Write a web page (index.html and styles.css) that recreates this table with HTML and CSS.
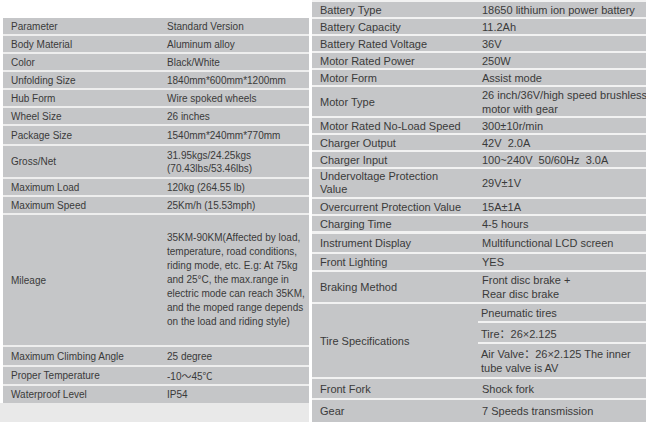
FILE: index.html
```html
<!DOCTYPE html>
<html>
<head>
<meta charset="utf-8">
<link rel="stylesheet" href="styles.css">
</head>
<body>
<div class="page">
  <div class="left-col">
    <div class="spec spec-left">
      <div class="row h16"><div class="k">Parameter</div><div class="v">Standard Version</div></div>
      <div class="row h16"><div class="k">Body Material</div><div class="v">Aluminum alloy</div></div>
      <div class="row h16"><div class="k">Color</div><div class="v">Black/White</div></div>
      <div class="row h16"><div class="k">Unfolding Size</div><div class="v">1840mm*600mm*1200mm</div></div>
      <div class="row h16"><div class="k">Hub Form</div><div class="v">Wire spoked wheels</div></div>
      <div class="row h16"><div class="k">Wheel Size</div><div class="v">26 inches</div></div>
      <div class="row h18"><div class="k">Package Size</div><div class="v">1540mm*240mm*770mm</div></div>
      <div class="row h31"><div class="k">Gross/Net</div><div class="v lh13">31.95kgs/24.25kgs<br>(70.43lbs/53.46lbs)</div></div>
      <div class="row h16"><div class="k">Maximum Load</div><div class="v">120kg (264.55 lb)</div></div>
      <div class="row h16"><div class="k">Maximum Speed</div><div class="v">25Km/h (15.53mph)</div></div>
      <div class="row h130"><div class="k">Mileage</div><div class="v lh14">35KM-90KM(Affected by load,<br>temperature, road conditions,<br>riding mode, etc. E.g: At 75kg<br>and 25°C, the max.range in<br>electric mode can reach 35KM,<br>and the moped range depends<br>on the load and riding style)</div></div>
      <div class="row h18"><div class="k">Maximum Climbing Angle</div><div class="v">25 degree</div></div>
      <div class="row h17"><div class="k">Proper Temperature</div><div class="v">-10～45℃</div></div>
      <div class="row h17"><div class="k">Waterproof Level</div><div class="v">IP54</div></div>
    </div>
    <div class="footer-band"></div>
  </div>
  <div class="spec spec-right">
    <div class="row h15"><div class="k">Battery Type</div><div class="v">18650 lithium ion power battery</div></div>
    <div class="row h15"><div class="k">Battery Capacity</div><div class="v">11.2Ah</div></div>
    <div class="row h15"><div class="k">Battery Rated Voltage</div><div class="v">36V</div></div>
    <div class="row h15"><div class="k">Motor Rated Power</div><div class="v">250W</div></div>
    <div class="row h15"><div class="k">Motor Form</div><div class="v">Assist mode</div></div>
    <div class="row h29"><div class="k">Motor Type</div><div class="v lh14">26 inch/36V/high speed brushless<br>motor with gear</div></div>
    <div class="row h15"><div class="k">Motor Rated No-Load Speed</div><div class="v">300±10r/min</div></div>
    <div class="row h15"><div class="k">Charger Output</div><div class="v">42V&nbsp; 2.0A</div></div>
    <div class="row h15"><div class="k">Charger Input</div><div class="v">100~240V&nbsp; 50/60Hz&nbsp; 3.0A</div></div>
    <div class="row h28"><div class="k lh13">Undervoltage Protection<br>Value</div><div class="v">29V±1V</div></div>
    <div class="row h15"><div class="k">Overcurrent Protection Value</div><div class="v">15A±1A</div></div>
    <div class="row h15"><div class="k">Charging Time</div><div class="v">4-5 hours</div></div>
    <div class="row h18 gap-above"><div class="k">Instrument Display</div><div class="v">Multifunctional LCD screen</div></div>
    <div class="row h16"><div class="k">Front Lighting</div><div class="v">YES</div></div>
    <div class="row h30"><div class="k">Braking Method</div><div class="v lh14">Front disc brake +<br>Rear disc brake</div></div>
    <div class="row h73">
      <div class="k">Tire Specifications</div>
      <div class="subs">
        <div class="sub h17">Pneumatic tires</div>
        <div class="sub h19">Tire：26×2.125</div>
        <div class="sub grow lh14">Air Valve：26×2.125 The inner<br>tube valve is AV</div>
      </div>
    </div>
    <div class="row h19"><div class="k">Front Fork</div><div class="v">Shock fork</div></div>
    <div class="row h22"><div class="k">Gear</div><div class="v">7 Speeds transmission</div></div>
  </div>
</div>
</body>
</html>
```
FILE: styles.css
```css
html, body {
  margin: 0;
  padding: 0;
  background: #ffffff;
}
body {
  font-family: "Liberation Sans", Arial, "Noto Sans CJK SC", sans-serif;
  color: #3a3a3a;
}
.page {
  width: 646px;
  height: 422px;
  display: flex;
  overflow: hidden;
  background: #ffffff;
}
.left-col {
  width: 309px;
  flex: none;
  display: flex;
  flex-direction: column;
  padding-top: 18px;
  box-sizing: border-box;
}
.spec {
  display: flex;
  flex-direction: column;
  gap: 2px;
}
.spec-left {
  margin-left: 3px;
  font-size: 10px;
  background: #eeeeee;
}
.footer-band {
  flex: 1;
  background: #e9e9e9;
}
.spec-right {
  flex: 1;
  margin-left: 3px;
  padding-top: 2px;
  font-size: 11px;
  overflow: hidden;
  background: #f2f2f2;
  align-self: flex-start;
}
.row {
  display: grid;
  background: #c5c6c8;
  white-space: nowrap;
}
.spec-left .row {
  grid-template-columns: 160px 1fr;
}
.spec-right .row {
  grid-template-columns: 166px 1fr;
}
.k {
  display: flex;
  align-items: center;
  padding-left: 8px;
}
.v {
  display: flex;
  align-items: center;
  padding-left: 4px;
}
.lh13 { line-height: 13px; }
.lh14 { line-height: 14px; }
.gap-above { margin-top: 1px; }
.subs {
  display: flex;
  flex-direction: column;
  gap: 2px;
  background: #f2f2f2;
}
.sub {
  display: flex;
  align-items: center;
  padding-left: 3px;
  background: #c5c6c8;
}
.sub.grow { flex: 1; }
.h15 { height: 15px; }
.h16 { height: 16px; }
.h17 { height: 17px; }
.h18 { height: 18px; }
.h19 { height: 19px; }
.h22 { height: 22px; }
.h28 { height: 28px; }
.h29 { height: 29px; }
.h30 { height: 30px; }
.h31 { height: 31px; }
.h73 { height: 73px; }
.h130 { height: 130px; }
```
